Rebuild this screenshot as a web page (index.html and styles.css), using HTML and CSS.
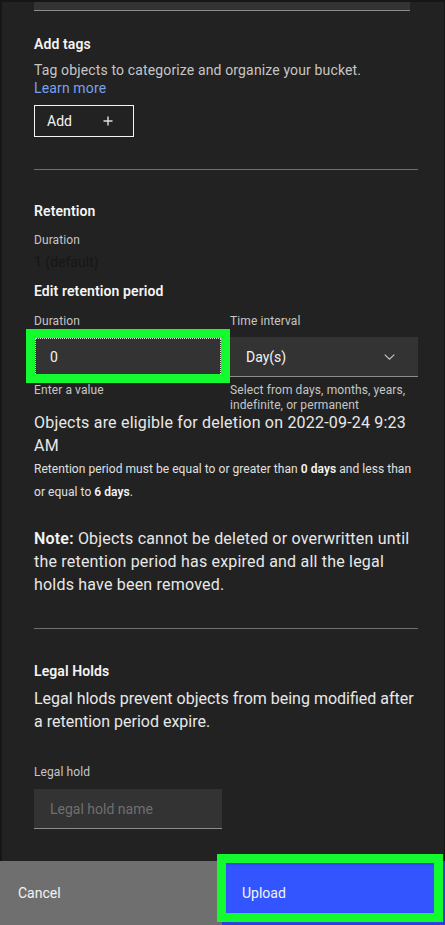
FILE: index.html
```html
<!DOCTYPE html>
<html lang="en">
<head>
<meta charset="utf-8">
<title>Upload options</title>
<link rel="stylesheet" href="styles.css">
</head>
<body>
<div class="screen">
  <div class="panel">
    <div class="content">
      <div class="prev-field"></div>

      <section class="tags">
        <h3 class="heading">Add tags</h3>
        <p class="desc">Tag objects to categorize and organize your bucket.<br><a class="link" href="#">Learn more</a></p>
        <button class="add-btn" type="button"><span>Add</span>
          <svg class="plus" width="10" height="10" viewBox="0 0 10 10"><path d="M5 0.5V9.5M0.5 5H9.5" stroke="#e0e0e0" stroke-width="1.4" fill="none"/></svg>
        </button>
      </section>

      <hr class="divider divider-a">

      <section class="retention">
        <h3 class="heading">Retention</h3>
        <div class="label ret-label">Duration</div>
        <div class="default-val">1 (default)</div>
        <h3 class="heading edit-heading">Edit retention period</h3>
        <div class="fields">
          <div class="field">
            <div class="label">Duration</div>
            <div class="input-wrap">
              <div class="input focused">0</div>
              <div class="annot annot-input"></div>
            </div>
            <div class="helper">Enter a value</div>
          </div>
          <div class="field">
            <div class="label">Time interval</div>
            <div class="select">
              <span>Day(s)</span>
              <svg class="chev" width="11" height="6" viewBox="0 0 11 6"><path d="M0.7 0.7L5.5 5.2L10.3 0.7" stroke="#c6c6c6" stroke-width="1.1" fill="none"/></svg>
            </div>
            <div class="helper">Select from days, months, years, indefinite, or permanent</div>
          </div>
        </div>
        <p class="eligible">Objects are eligible for deletion on 2022-09-24 9:23 AM</p>
        <p class="rule">Retention period must be equal to or greater than <b>0 days</b> and less than or equal to <b>6 days</b>.</p>
        <p class="note"><b>Note:</b> Objects cannot be deleted or overwritten until the retention period has expired and all the legal holds have been removed.</p>
      </section>

      <hr class="divider divider-b">

      <section class="holds">
        <h3 class="heading">Legal Holds</h3>
        <p class="holds-desc">Legal hlods prevent objects from being modified after a retention period expire.</p>
        <div class="label hold-label">Legal hold</div>
        <div class="text-input placeholder">Legal hold name</div>
      </section>
    </div>
  </div>

  <footer class="footer">
    <button class="btn cancel" type="button">Cancel</button>
    <div class="upload-wrap">
      <button class="btn upload" type="button">Upload</button>
      <div class="annot annot-upload"></div>
    </div>
  </footer>
</div>
</body>
</html>
```

FILE: styles.css
```css
* { box-sizing: border-box; }
html, body {
  margin: 0;
  padding: 0;
  background: #161616;
}
body {
  font-family: Roboto, "Liberation Sans", sans-serif;
  color: #f4f4f4;
}
.screen {
  width: 445px;
  height: 925px;
  display: flex;
  flex-direction: column;
  overflow: hidden;
}
.panel {
  margin: 2px 1px 0 2px;
  background: #222222;
  flex: 1;
}
.content {
  padding: 0 26px 0 32px;
}
.prev-field {
  width: 376px;
  height: 9px;
  background: #333333;
  border-bottom: 1px solid #8d8d8d;
}
.heading {
  margin: 0;
  font-size: 14px;
  line-height: 18px;
  font-weight: 600;
  letter-spacing: 0.1px;
  color: #f4f4f4;
}
.tags { padding-top: 24px; }
.desc {
  margin: 8px 0 0;
  font-size: 14px;
  line-height: 18px;
  letter-spacing: 0.14px;
  color: #c6c6c6;
}
.link { color: #78a0f0; text-decoration: none; }
.add-btn {
  margin-top: 8px;
  width: 100px;
  height: 32px;
  background: transparent;
  border: 1px solid #f4f4f4;
  color: #f4f4f4;
  font: inherit;
  font-size: 14px;
  display: flex;
  align-items: center;
  justify-content: space-between;
  padding: 0 20px 0 12px;
  cursor: pointer;
}
.divider {
  border: 0;
  border-top: 1px solid #6f6f6f;
  margin: 0;
}
.divider-a { margin-top: 32px; }
.retention { padding-top: 32px; }
.label {
  font-size: 12px;
  line-height: 16px;
  letter-spacing: 0.1px;
  color: #c6c6c6;
}
.ret-label { margin-top: 12px; }
.default-val {
  margin-top: 5px;
  font-size: 14px;
  line-height: 18px;
  color: #161616;
}
.edit-heading { margin-top: 11px; }
.fields {
  margin-top: 13px;
  display: grid;
  grid-template-columns: 188px 188px;
  gap: 8px;
}
.field .label { margin-bottom: 8px; }
.input-wrap { position: relative; }
.input {
  height: 40px;
  background: #333333;
  font-size: 14px;
  line-height: 40px;
  padding: 0 16px;
  color: #f4f4f4;
}
.focused {
  outline: 1px dotted #e0e0e0;
  outline-offset: -2px;
}
.annot {
  position: absolute;
  border: 9px solid #13fb2f;
  pointer-events: none;
}
.annot-input {
  left: -8px;
  top: -8px;
  width: 204px;
  height: 54px;
}
.select {
  height: 40px;
  background: #333333;
  border-bottom: 1px solid #8d8d8d;
  display: flex;
  align-items: center;
  justify-content: space-between;
  padding: 0 23px 0 16px;
  font-size: 14px;
  color: #f4f4f4;
}
.chev { margin-top: 1px; }
.helper {
  margin-top: 6px;
  font-size: 12px;
  line-height: 15px;
  letter-spacing: 0.1px;
  color: #c6c6c6;
}
.eligible {
  margin: -2px 0 0;
  font-size: 16px;
  line-height: 23px;
  letter-spacing: 0.2px;
  color: #e8e8e8;
}
.rule {
  margin: 1px 0 0;
  font-size: 12px;
  line-height: 23px;
  letter-spacing: 0.05px;
  color: #e0e0e0;
}
.rule b, .note b { font-weight: 600; color: #f4f4f4; }
.note {
  margin: 23px 0 0;
  font-size: 16px;
  line-height: 23px;
  letter-spacing: 0.2px;
  color: #e8e8e8;
}
.divider-b { margin-top: 32px; }
.holds { padding-top: 33px; }
.holds-desc {
  margin: 7px 0 0;
  font-size: 16px;
  line-height: 23px;
  color: #e8e8e8;
}
.hold-label { margin-top: 31px; }
.text-input {
  margin-top: 9px;
  width: 188px;
  height: 40px;
  background: #333333;
  border-bottom: 1px solid #8d8d8d;
  font-size: 14px;
  line-height: 40px;
  padding: 0 16px;
}
.placeholder { color: #6f6f6f; }
.footer {
  height: 64px;
  display: grid;
  grid-template-columns: 222px 1fr;
  flex: none;
}
.btn {
  border: 0;
  margin: 0;
  font: inherit;
  font-size: 14px;
  text-align: left;
  height: 64px;
  width: 100%;
  padding: 0 0 0 18px;
  color: #f4f4f4;
  cursor: pointer;
}
.cancel { background: #6f6f6f; }
.upload-wrap { position: relative; }
.upload {
  background: #3355ff;
  padding-left: 20px;
  box-shadow: inset 0 0 3px 3px rgba(20, 30, 120, 0.35);
}
.annot-upload {
  left: -5px;
  top: -7px;
  width: 226px;
  height: 68px;
}
```
